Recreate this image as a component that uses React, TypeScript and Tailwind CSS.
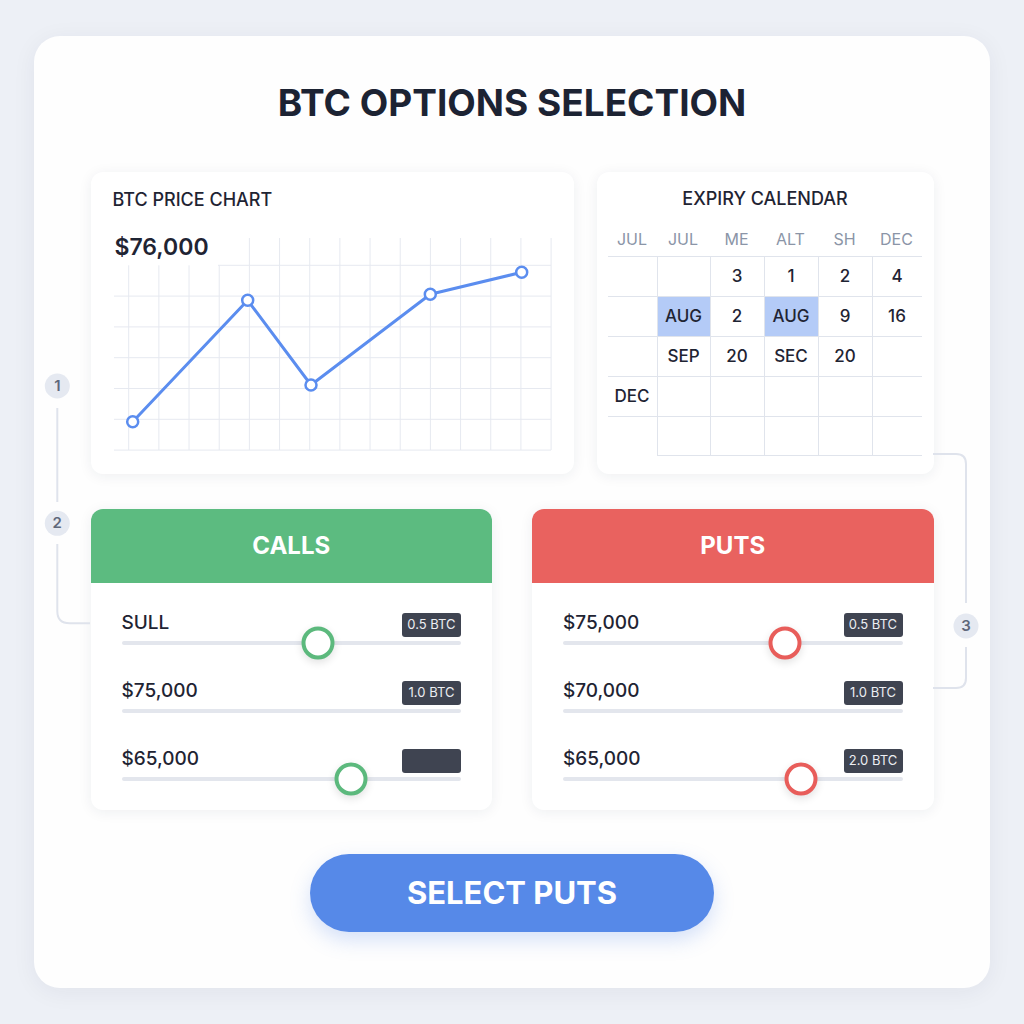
import React from "react";

type SliderRow = {
  label: string;
  badge: string;
  thumb?: number;
};

const callRows: SliderRow[] = [
  { label: "SULL", badge: "0.5 BTC", thumb: 0.578 },
  { label: "$75,000", badge: "1.0 BTC" },
  { label: "$65,000", badge: "", thumb: 0.677 },
];

const putRows: SliderRow[] = [
  { label: "$75,000", badge: "0.5 BTC", thumb: 0.653 },
  { label: "$70,000", badge: "1.0 BTC" },
  { label: "$65,000", badge: "2.0 BTC", thumb: 0.7 },
];

const calHeader = ["JUL", "JUL", "ME", "ALT", "SH", "DEC"];
const calRows: { text: string; hl?: boolean }[][] = [
  [{ text: "" }, { text: "" }, { text: "3" }, { text: "1" }, { text: "2" }, { text: "4" }],
  [{ text: "" }, { text: "AUG", hl: true }, { text: "2" }, { text: "AUG", hl: true }, { text: "9" }, { text: "16" }],
  [{ text: "" }, { text: "SEP" }, { text: "20" }, { text: "SEC" }, { text: "20" }, { text: "" }],
  [{ text: "DEC" }, { text: "" }, { text: "" }, { text: "" }, { text: "" }, { text: "" }],
  [{ text: "" }, { text: "" }, { text: "" }, { text: "" }, { text: "" }, { text: "" }],
];

const points: [number, number][] = [
  [41.7, 189.7],
  [156.7, 68.3],
  [220, 153],
  [339.3, 62.3],
  [430.7, 40.3],
];

function PriceChart() {
  const vLines = Array.from({ length: 15 }, (_, i) => 37.7 + 30.17 * i);
  const hLines = Array.from({ length: 7 }, (_, j) => 33.3 + 30.8 * j);
  return (
    <div className="w-[483px] h-[302px] bg-white rounded-xl shadow-[0_2px_14px_rgba(30,41,70,0.07)] flex flex-col">
      <div className="pl-[22px] pt-[14px] h-[60px] text-[18px] font-medium text-[#1f2433]">BTC PRICE CHART</div>
      <div className="relative">
        <svg width="483" height="230" viewBox="0 0 483 230">
          {vLines.map((x, i) => (
            <line key={"v" + i} x1={x} x2={x} y1={i < 4 ? 33.3 : 6} y2={218} stroke="#e6e9f0" strokeWidth="1" />
          ))}
          {hLines.map((y, j) => (
            <line key={"h" + j} x1={j === 0 ? 127 : 23} x2={460} y1={y} y2={y} stroke="#e6e9f0" strokeWidth="1" />
          ))}
          <polyline
            points={points.map((p) => p.join(",")).join(" ")}
            fill="none"
            stroke="#5b8def"
            strokeWidth="3"
            strokeLinejoin="round"
          />
          {points.map(([x, y], i) => (
            <circle key={i} cx={x} cy={y} r="5.5" fill="white" stroke="#5b8def" strokeWidth="2.5" />
          ))}
        </svg>
        <div className="absolute left-[24px] top-[1px] text-[23px] leading-[28px] font-semibold text-[#1f2433]">$76,000</div>
      </div>
    </div>
  );
}

function ExpiryCalendar() {
  return (
    <div className="w-[337px] h-[302px] bg-white rounded-xl shadow-[0_2px_14px_rgba(30,41,70,0.07)] flex flex-col items-center">
      <div className="pt-[13px] h-[50px] text-[18px] font-medium text-[#1f2433]">EXPIRY CALENDAR</div>
      <div className="grid grid-cols-[49px_53px_54px_54px_54px_50px] w-[314px] -ml-[1px]">
        {calHeader.map((h, i) => (
          <div key={i} className="h-[34px] flex items-center justify-center text-[16px] text-[#8b95a7]">
            {h}
          </div>
        ))}
        {calRows.map((row, r) =>
          row.map((c, i) => (
            <div
              key={r + "-" + i}
              className={
                "h-[40px] flex items-center justify-center text-[17px] font-medium text-[#1f2433] border-t-[1.5px] border-[#e0e4ec] " +
                (i > 0 ? "border-l-[1.5px] " : "") +
                (r === 4 && i > 0 ? "border-b-[1.5px] " : "") +
                (c.hl ? "bg-[#b4cbf7]" : "")
              }
            >
              {c.text}
            </div>
          ))
        )}
      </div>
    </div>
  );
}

function OptionPanel({ title, rows, header, ring }: { title: string; rows: SliderRow[]; header: string; ring: string }) {
  return (
    <div className="w-[402px] h-[301px] bg-white rounded-xl shadow-[0_2px_14px_rgba(30,41,70,0.07)] overflow-hidden flex flex-col">
      <div className={"h-[74px] flex items-center justify-center text-white text-[24px] font-bold " + header}>{title}</div>
      <div className="px-[31px] pt-[26px] flex flex-col gap-[32px]">
        {rows.map((row, i) => (
          <div key={i} className="flex flex-col">
            <div className="h-[28px] flex items-end justify-between">
              <span className="self-center text-[19px] font-medium text-[#1f2433]">{row.label}</span>
              <span className="w-[59px] h-[24px] rounded-[3px] bg-[#3f4451] text-[#eceef2] text-[13px] flex items-center justify-center">
                {row.badge}
              </span>
            </div>
            <div className="relative mt-[4px] h-[4px] rounded-full bg-[#e3e6ed]">
              {row.thumb !== undefined && (
                <div
                  className={
                    "absolute top-1/2 w-[33px] h-[33px] -translate-x-1/2 -translate-y-1/2 rounded-full bg-white border-[4.5px] shadow-[0_3px_8px_rgba(0,0,0,0.12)] " +
                    ring
                  }
                  style={{ left: `${row.thumb * 100}%` }}
                />
              )}
            </div>
          </div>
        ))}
      </div>
    </div>
  );
}

function Connectors() {
  return (
    <svg className="absolute inset-0 pointer-events-none" width="956" height="952" viewBox="0 0 956 952">
      <g fill="none" stroke="#dfe3ec" strokeWidth="2">
        <line x1="23.3" y1="372" x2="23.3" y2="466" />
        <path d="M23.3 508 V575 Q23.3 587.3 35.6 587.3 H56" />
        <path d="M899 418 H922 Q932 418 932 428 V567" />
        <path d="M932 611 V642 Q932 652 922 652 H899" />
      </g>
      {[
        [23.3, 350, "1"],
        [23.3, 487.3, "2"],
        [932, 590, "3"],
      ].map(([x, y, t]) => (
        <g key={t as string}>
          <circle cx={x as number} cy={y as number} r="12.5" fill="#e5e9f1" />
          <text
            x={x as number}
            y={(y as number) + 5}
            textAnchor="middle"
            fontSize="15"
            fontWeight="600"
            fill="#5f687b"
            fontFamily="Inter, sans-serif"
          >
            {t}
          </text>
        </g>
      ))}
    </svg>
  );
}

export default function App() {
  return (
    <div
      className="w-[1024px] h-[1024px] bg-[#edf0f6] pt-[36px] pl-[34px]"
      style={{ fontFamily: "Inter, 'Noto Sans', sans-serif" }}
    >
      <div className="relative w-[956px] h-[952px] bg-[#fefefe] rounded-[26px] shadow-[0_4px_24px_rgba(30,41,70,0.06)] flex flex-col items-center pt-[45px]">
        <Connectors />
        <h1 className="h-[44px] text-[37px] leading-[44px] font-bold text-[#1c2333]">BTC OPTIONS SELECTION</h1>
        <div className="mt-[47px] w-[843px] flex flex-col gap-[35px]">
          <div className="flex gap-[23px]">
            <PriceChart />
            <ExpiryCalendar />
          </div>
          <div className="flex gap-[40px]">
            <OptionPanel title="CALLS" rows={callRows} header="bg-[#5cbb80]" ring="border-[#5cb97d]" />
            <OptionPanel title="PUTS" rows={putRows} header="bg-[#e9625f]" ring="border-[#e85d5a]" />
          </div>
        </div>
        <button className="mt-[44px] w-[404px] h-[78px] rounded-full bg-[#5689e8] text-white text-[31px] font-bold shadow-[0_8px_20px_rgba(86,137,232,0.25)]">
          SELECT PUTS
        </button>
      </div>
    </div>
  );
}
